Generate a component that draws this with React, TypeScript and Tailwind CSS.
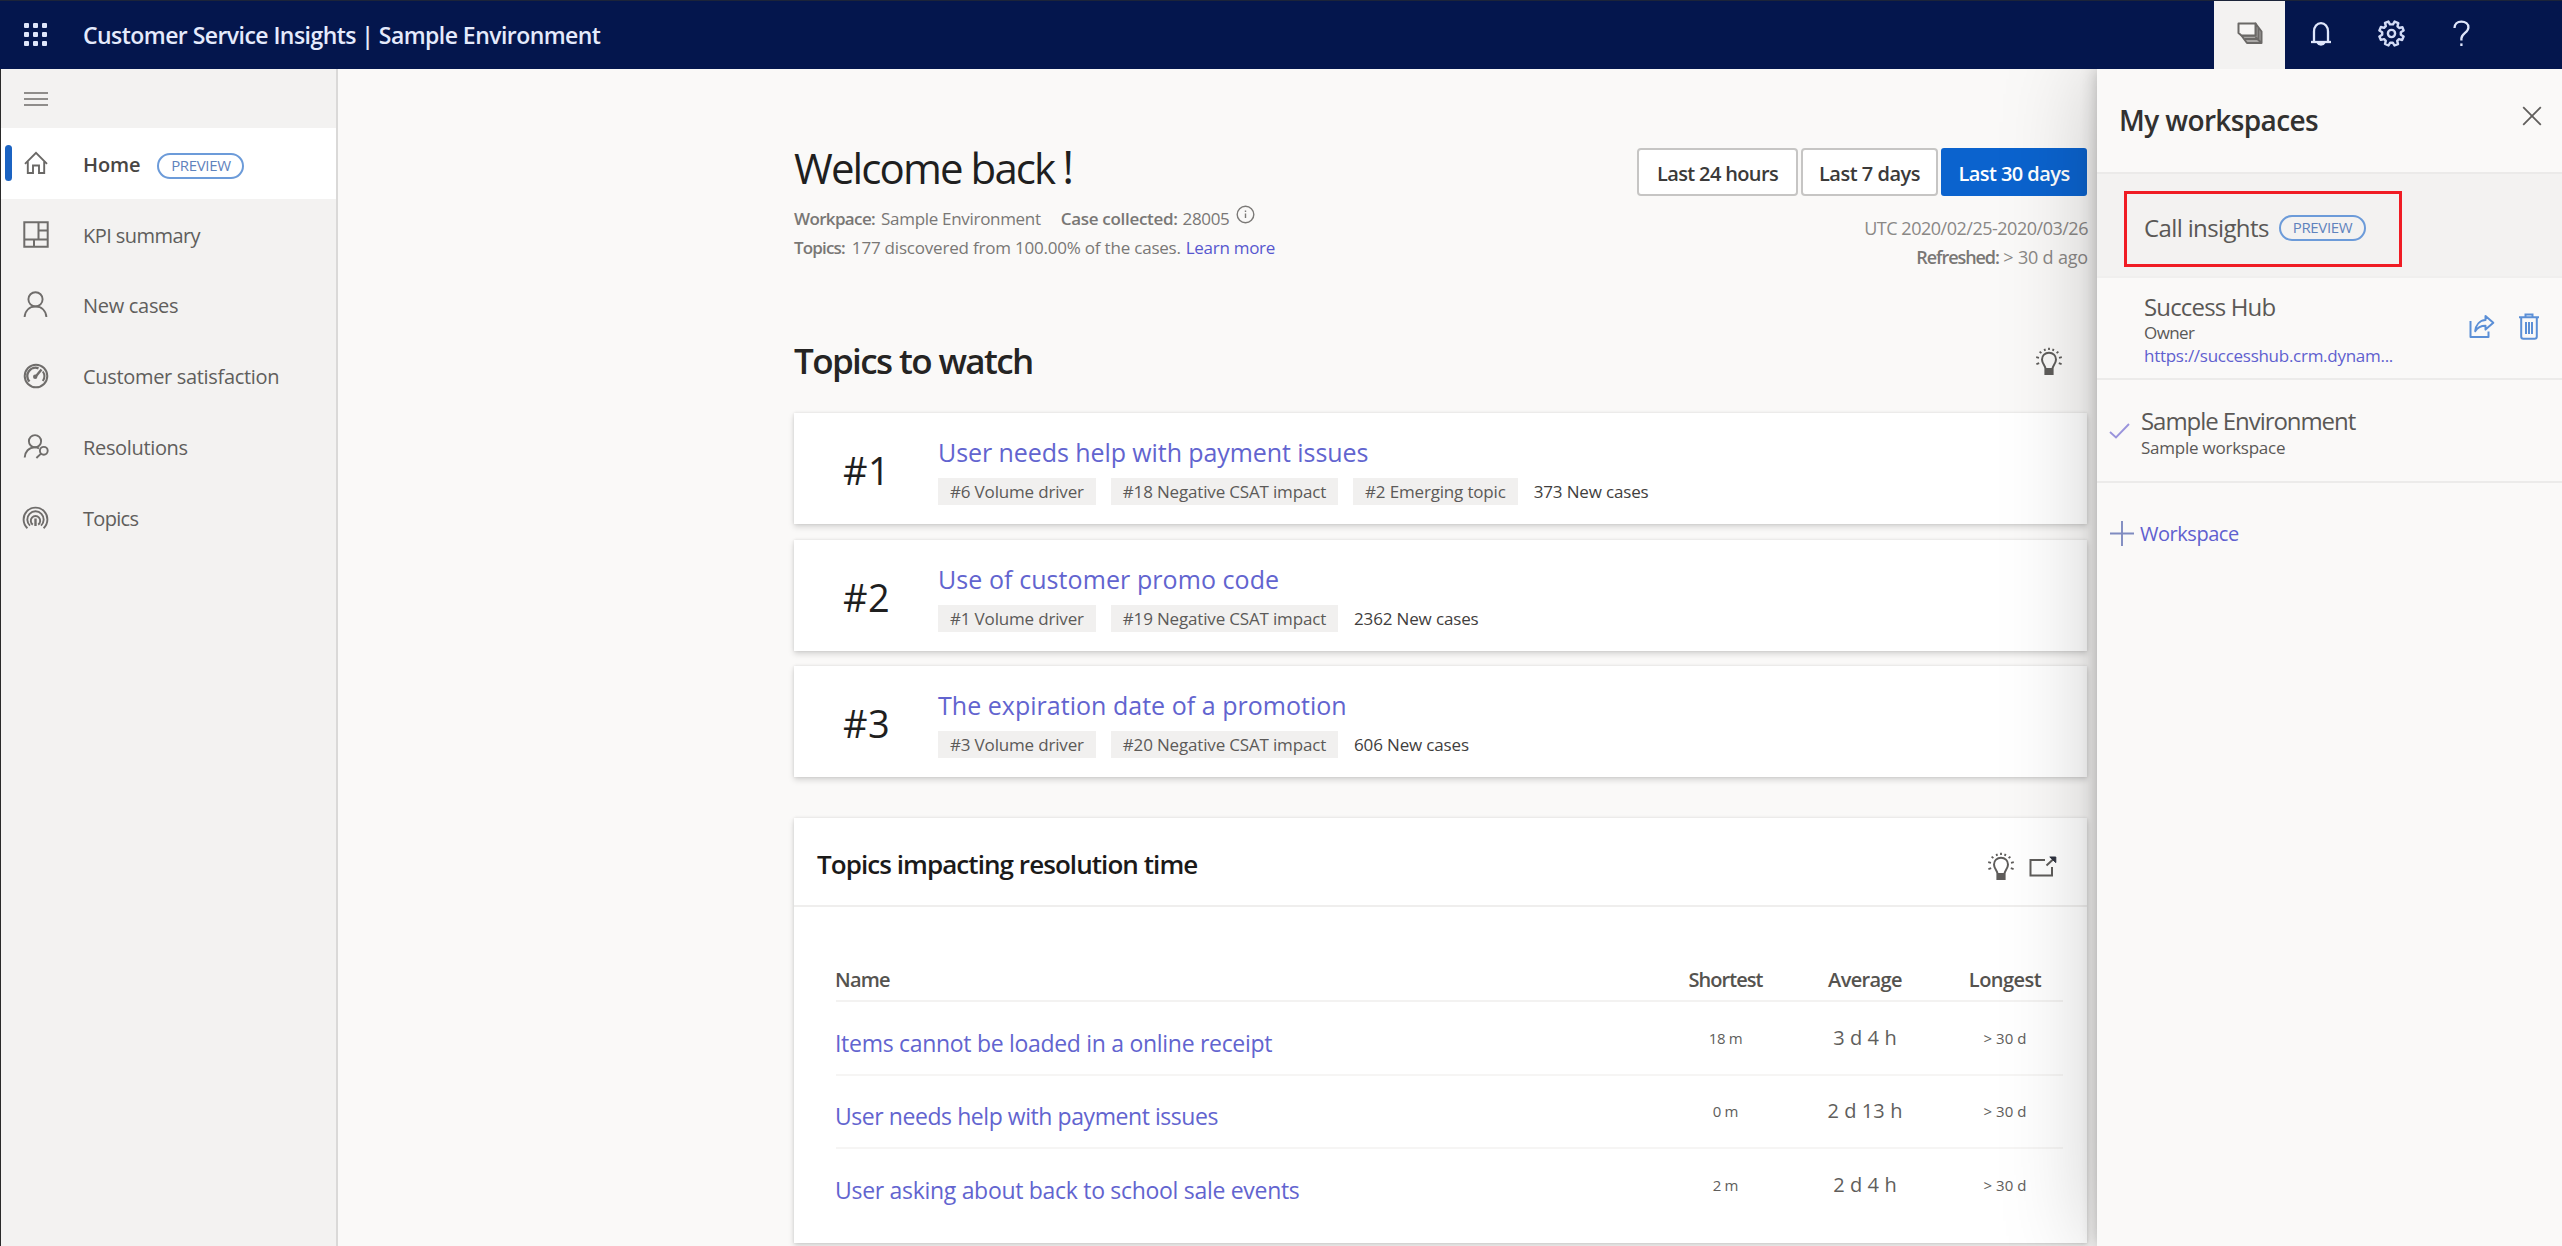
import React from "react";

type IconProps = { className?: string };

const StackIcon = () => (
  <svg width="26" height="23" viewBox="0 0 26 23" fill="none" stroke="#6b6967" strokeWidth="2" strokeLinejoin="round">
    <path d="M7 17L4.5 13.5H18.5V1.5L24.5 9.5V21H10Z" fill="#a9a7a5" />
    <path d="M1.5 1.5H18.5V13.5H4.5L1.5 11Z" fill="#f7f6f5" />
    <path d="M21.5 6V17H7.5" />
    <path d="M18.5 15L24 20.5" />
  </svg>
);

const BellIcon = () => (
  <svg width="22" height="26" viewBox="0 0 22 26" fill="none" stroke="#dfe6fb" strokeWidth="2.3">
    <path d="M1 21H21" />
    <path d="M4 21V10.5C4 5.5 7 2.2 11 2.2S18 5.5 18 10.5V21" />
    <path d="M8 22.2C8.6 24 13.4 24 14 22.2Z" fill="#dfe6fb" />
  </svg>
);

const GearIcon = () => (
  <svg width="27" height="27" viewBox="0 0 27 27" fill="none" stroke="#d3dcf6" strokeWidth="2.4" strokeLinejoin="round">
    <path d="M10.4 1.6L12 4.4H15L16.6 1.6L20.3 3.1L19.5 6.3L21.2 8L24.4 7.2L25.6 10.5L22.8 12.2V14.8L25.6 16.5L24.1 20L20.9 19.2L19.2 20.9L20 24.1L16.5 25.5L14.8 22.7H12.2L10.5 25.5L7 24L7.8 20.8L6.1 19.1L2.9 19.9L1.4 16.5L4.2 14.8V12.2L1.4 10.5L2.9 7L6.1 7.8L7.8 6.1L7 2.9Z" />
    <circle cx="13.5" cy="13.5" r="3.6" />
  </svg>
);

const HelpIcon = () => (
  <svg width="17" height="27" viewBox="0 0 17 27" fill="none" stroke="#dfe6fb" strokeWidth="2.3">
    <path d="M1.5 8C1.5 4 4.3 1.6 8.4 1.6S15.4 4 15.4 7.4C15.4 12.6 8.4 13 8.4 18.6V20.6" />
    <path d="M8.4 23.4V26" />
  </svg>
);

const HomeIcon = () => (
  <svg width="24" height="24" viewBox="0 0 24 24" fill="none" stroke="#6a6866" strokeWidth="1.9">
    <path d="M1 12.8L12 1.8L23 12.8" />
    <path d="M3.8 10.5V22H9V14.5H15V22H20.2V10.5" />
  </svg>
);

const KpiIcon = () => (
  <svg width="26" height="27" viewBox="0 0 26 27" fill="none" stroke="#6f6d6b" strokeWidth="2">
    <path d="M1.3 1.3H24.7V25.7H1.3Z" />
    <path d="M15.5 1.3V18.5M1.3 18.5H24.7M15.5 9.5H24.7M11 18.5V25.7" />
  </svg>
);

const PersonIcon = () => (
  <svg width="25" height="27" viewBox="0 0 25 27" fill="none" stroke="#6f6d6b" strokeWidth="1.9">
    <circle cx="12.5" cy="8.3" r="7.1" />
    <path d="M1.6 26C2.2 19.5 6.4 15.5 12.5 15.5S22.8 19.5 23.4 26" />
  </svg>
);

const GaugeIcon = () => (
  <svg width="26" height="26" viewBox="0 0 26 26" fill="none" stroke="#6f6d6b">
    <circle cx="13" cy="13" r="11.3" strokeWidth="2" />
    <path d="M6.5 18.5A8.2 8.2 0 0 1 15.5 5.3" strokeWidth="2.4" />
    <path d="M19.8 8.5A8.2 8.2 0 0 1 19.8 18" strokeWidth="2" />
    <path d="M12.3 14L18.5 6.6" strokeWidth="2.4" />
    <circle cx="12.2" cy="13.8" r="2.2" fill="#6f6d6b" stroke="none" />
  </svg>
);

const PersonKeyIcon = () => (
  <svg width="26" height="25" viewBox="0 0 26 25" fill="none" stroke="#6f6d6b" strokeWidth="1.9">
    <circle cx="12" cy="7.2" r="6.1" />
    <path d="M1.7 23.5C2 17.6 5.8 13.4 11.8 13.4C13.4 13.4 14.8 13.7 16 14.3" />
    <circle cx="20.8" cy="16.8" r="3.9" />
    <path d="M18 19.6L13.4 24" />
  </svg>
);

const BroadcastIcon = () => (
  <svg width="27" height="25" viewBox="0 0 27 25" fill="none" stroke="#6f6d6b" strokeWidth="1.9">
    <path d="M5.4 23.2A11.9 11.9 0 1 1 21.6 23.2" />
    <path d="M8 20.6A8.2 8.2 0 1 1 19 20.6" />
    <path d="M10.8 19.6A4.7 4.7 0 1 1 16.2 19.6" />
    <path d="M13.5 13.5V21" strokeWidth="2.4" />
  </svg>
);

const BulbIcon = ({ className }: IconProps) => (
  <svg className={className} width="28" height="29" viewBox="0 0 28 29" fill="none" stroke="#5f5d5b" strokeWidth="2">
    <path d="M10.4 21.5C10.4 18.4 7 16.6 7 12.4C7 8.6 10 5.7 14 5.7S21 8.6 21 12.4C21 16.6 17.6 18.4 17.6 21.5V27H10.4Z" />
    <path d="M10.4 22.4H17.6M10.4 25H17.6" strokeWidth="2.6" />
    <path d="M14 .8V3M9.4 1.8L10.2 3.8M18.6 1.8L17.8 3.8M4.6 4.6L6.4 6.2M23.4 4.6L21.6 6.2M1.2 10.2L4 10.8M26.8 10.2L24 10.8M1.4 17.2L4.2 16.2M26.6 17.2L23.8 16.2" strokeWidth="1.8" />
  </svg>
);

const PopOutIcon = () => (
  <svg width="28" height="21" viewBox="0 0 28 21" fill="none" stroke="#5f5d5b" strokeWidth="2">
    <path d="M16 4H1.5V19.5H23V11" />
    <path d="M17.5 9.5L24 3.5" />
    <path d="M20.8 1H26.8V6.6Z" fill="#2f3340" stroke="#2f3340" strokeWidth="1" />
  </svg>
);

const InfoIcon = () => (
  <svg width="19" height="19" viewBox="0 0 19 19" fill="none" stroke="#7b7977" strokeWidth="1.4">
    <circle cx="9.5" cy="9.5" r="8.3" />
    <path d="M9.5 8.4V13M9.5 5.4V7" />
  </svg>
);

const CloseIcon = () => (
  <svg width="20" height="20" viewBox="0 0 20 20" stroke="#605e5c" strokeWidth="1.8">
    <path d="M1.2 1.2L18.8 18.8M18.8 1.2L1.2 18.8" />
  </svg>
);

const ShareIcon = () => (
  <svg width="26" height="25" viewBox="0 0 26 25" fill="none" stroke="#5b8fd6" strokeWidth="2" strokeLinejoin="round">
    <path d="M1.5 7V23H19.5V17.5" />
    <path d="M16.5 2L24.3 8.8L16.5 15.6V11.8C11.8 11.8 8.6 13.4 6.2 17.2C6.8 10.8 10.8 6.4 16.5 6Z" />
  </svg>
);

const TrashIcon = () => (
  <svg width="20" height="27" viewBox="0 0 20 27" fill="none" stroke="#5b8fd6" strokeWidth="2">
    <path d="M0 4.2H20M6.5 4V1.4H13.5V4" />
    <path d="M2.2 4.5V23.5C2.2 25 3 25.7 4.4 25.7H15.6C17 25.7 17.8 25 17.8 23.5V4.5" />
    <path d="M7 9V21M10 9V21M13 9V21" />
  </svg>
);

const CheckIcon = () => (
  <svg width="21" height="16" viewBox="0 0 21 16" fill="none" stroke="#9a94dc" strokeWidth="1.9">
    <path d="M1 9L7 14.5L20 1" />
  </svg>
);

const PlusIcon = () => (
  <svg width="24" height="25" viewBox="0 0 24 25" stroke="#7f8bc0" strokeWidth="1.9">
    <path d="M12 0V25M0 12.5H24" />
  </svg>
);

const Preview = () => (
  <span className="flex h-[26px] w-[87px] shrink-0 items-center justify-center rounded-full border-2 border-[#6c9bd9] text-[15px] leading-none tracking-[-0.023em] text-[#5f83bd]">
    PREVIEW
  </span>
);

const NAV = [
  { label: "Home", icon: HomeIcon, active: true, text: "font-semibold tracking-[-0.005em] text-[#484644]" },
  { label: "KPI summary", icon: KpiIcon, text: "tracking-[-0.028em]" },
  { label: "New cases", icon: PersonIcon, text: "tracking-[-0.015em]" },
  { label: "Customer satisfaction", icon: GaugeIcon, text: "tracking-[-0.016em]" },
  { label: "Resolutions", icon: PersonKeyIcon, text: "tracking-[-0.017em]" },
  { label: "Topics", icon: BroadcastIcon, text: "tracking-[-0.034em]" },
];

const WATCH = [
  {
    rank: "#1",
    title: "User needs help with payment issues",
    tags: ["#6 Volume driver", "#18 Negative CSAT impact", "#2 Emerging topic"],
    cases: "373 New cases",
    tracking: "tracking-[-0.003em]",
  },
  {
    rank: "#2",
    title: "Use of customer promo code",
    tags: ["#1 Volume driver", "#19 Negative CSAT impact"],
    cases: "2362 New cases",
    tracking: "tracking-[0.003em]",
  },
  {
    rank: "#3",
    title: "The expiration date of a promotion",
    tags: ["#3 Volume driver", "#20 Negative CSAT impact"],
    cases: "606 New cases",
    tracking: "tracking-[0.001em]",
  },
];

const ROWS = [
  { name: "Items cannot be loaded in a online receipt", s: "18 m", a: "3 d 4 h", l: "> 30 d", tracking: "tracking-[-0.013em]" },
  { name: "User needs help with payment issues", s: "0 m", a: "2 d 13 h", l: "> 30 d", tracking: "tracking-[-0.019em]" },
  { name: "User asking about back to school sale events", s: "2 m", a: "2 d 4 h", l: "> 30 d", tracking: "tracking-[-0.013em]" },
];

const CARD = "bg-white shadow-[0_3px_6px_rgba(0,0,0,0.15),0_0_3px_rgba(0,0,0,0.10)]";
const GRID = "grid grid-cols-[820px_139px_140px_140px]";

function Header() {
  return (
    <header className="flex h-[69px] shrink-0 items-center border-t border-[#1c2439] bg-[#04164d]">
      <div className="ml-[24px] grid grid-cols-3 gap-[4px] pb-[2px]">
        {Array.from({ length: 9 }, (_, i) => (
          <span key={i} className="size-[5px] rounded-[1px] bg-[#dfe6fb]" />
        ))}
      </div>
      <h1 className="ml-[36px] text-[23px] font-semibold tracking-[-0.024em] text-[#e4eafc]">
        Customer Service Insights | Sample Environment
      </h1>
      <div className="mr-[65px] ml-auto flex h-full">
        <div className="flex w-[71px] items-center justify-center bg-[#f3f2f1] pb-[4px]">
          <StackIcon />
        </div>
        <div className="flex w-[71px] items-center justify-center pb-[3px]">
          <BellIcon />
        </div>
        <div className="flex w-[70px] items-center justify-center pb-[3px]">
          <GearIcon />
        </div>
        <div className="flex w-[71px] items-center justify-center pb-[3px]">
          <HelpIcon />
        </div>
      </div>
    </header>
  );
}

function Sidebar() {
  return (
    <nav className="w-[338px] shrink-0 border-r-2 border-l-[1.5px] border-r-[#dad9d8] border-l-[#2a2a2a] bg-[#f3f2f1]">
      <div className="flex h-[59px] flex-col gap-[4px] pt-[23px] pl-[23px]">
        <span className="h-[2px] w-[24px] bg-[#8f8d8b]" />
        <span className="h-[2px] w-[24px] bg-[#8f8d8b]" />
        <span className="h-[2px] w-[24px] bg-[#8f8d8b]" />
      </div>
      {NAV.map(({ label, icon: Icon, active, text }) => (
        <div key={label} className={`flex h-[70.8px] items-center ${active ? "bg-white" : ""}`}>
          <span className={`ml-[4px] h-[36px] w-[7px] rounded-sm ${active ? "bg-[#1b63c2]" : ""}`} />
          <span className="ml-[9px] flex w-[29px] justify-center">
            <Icon />
          </span>
          <span className={`ml-[33px] pt-[3px] text-[20px] text-[#605e5c] ${text}`}>{label}</span>
          {active && (
            <span className="mt-[5px] ml-[17px]">
              <Preview />
            </span>
          )}
        </div>
      ))}
    </nav>
  );
}

function Welcome() {
  return (
    <div className="flex justify-between pt-[73px]">
      <div className="text-[17px] leading-[28.5px] text-[#797775]">
        <h2 className="mb-[11px] text-[42px] leading-[52px] tracking-[-0.045em] text-[#1f1f1f]">
          Welcome back<span className="ml-[8px] text-[45px] leading-none">!</span>
        </h2>
        <div className="flex">
          <span className="font-semibold tracking-[-0.038em]">Workpace:</span>
          <span className="ml-[6px] tracking-[-0.018em]">Sample Environment</span>
          <span className="ml-[20px] font-semibold tracking-[-0.018em]">Case collected:</span>
          <span className="ml-[5px] tracking-[-0.02em]">28005</span>
          <span className="ml-[7px]">
            <InfoIcon />
          </span>
        </div>
        <div className="flex">
          <span className="font-semibold tracking-[-0.049em]">Topics:</span>
          <span className="ml-[7px] tracking-[-0.012em]">177 discovered from 100.00% of the cases.</span>
          <span className="ml-[5px] tracking-[-0.017em] text-[#5757cf]">Learn more</span>
        </div>
      </div>
      <div className="flex flex-col items-end pt-[6px]">
        <div className="flex h-[48px] gap-[3px] text-[20px] font-semibold text-[#3b3a39]">
          <span className="flex w-[161px] items-center justify-center rounded-[4px] border-2 border-[#c6c5c4] bg-white pt-[3px] tracking-[-0.032em]">
            Last 24 hours
          </span>
          <span className="flex w-[137px] items-center justify-center rounded-[4px] border-2 border-[#c6c5c4] bg-white pt-[3px] tracking-[-0.024em]">
            Last 7 days
          </span>
          <span className="flex w-[146px] items-center justify-center rounded-[3px] bg-[#0b63ce] pt-[3px] tracking-[-0.028em] text-white">
            Last 30 days
          </span>
        </div>
        <div className="-mr-px mt-[18px] text-right text-[18px] leading-[29px] text-[#8a8886]">
          <div className="tracking-[-0.027em]">UTC 2020/02/25-2020/03/26</div>
          <div className="tracking-[-0.01em]">
            <span className="font-semibold tracking-[-0.06em] text-[#797775]">Refreshed:</span> &gt; 30 d ago
          </div>
        </div>
      </div>
    </div>
  );
}

function TopicsToWatch() {
  return (
    <section>
      <div className="mt-[65px] mb-[28px] flex items-center justify-between pr-[24px]">
        <h3 className="text-[35px] leading-[48px] font-semibold tracking-[-0.046em] text-[#252423]">Topics to watch</h3>
        <BulbIcon />
      </div>
      <div className="flex flex-col gap-[15.5px]">
        {WATCH.map((t) => (
          <div key={t.rank} className={`flex h-[111px] items-center ${CARD}`}>
            <span className="ml-[49px] w-[95px] pt-[4px] text-[38px] tracking-[0.012em] text-[#1f1f1f]">{t.rank}</span>
            <div className="pt-[3px]">
              <div className={`text-[25px] leading-[34px] text-[#6264cf] ${t.tracking}`}>{t.title}</div>
              <div className="mt-[9px] flex items-center gap-[15px] text-[17px] leading-[27px] text-[#5c5a58]">
                {t.tags.map((tag) => (
                  <span key={tag} className="bg-[#f1f0ef] px-[12px] tracking-[-0.01em]">
                    {tag}
                  </span>
                ))}
                <span className="ml-px tracking-[-0.009em] text-[#3f3e3d]">{t.cases}</span>
              </div>
            </div>
          </div>
        ))}
      </div>
    </section>
  );
}

function ResolutionTime() {
  return (
    <section className={`mt-[41px] h-[425px] ${CARD}`}>
      <div className="flex h-[89px] items-center border-b-2 border-[#efeeed] pt-[6px] pr-[30px] pl-[23px]">
        <h3 className="text-[26px] font-semibold tracking-[-0.036em] text-[#1b1a19]">Topics impacting resolution time</h3>
        <BulbIcon className="mt-[4px] ml-auto" />
        <span className="mt-[4px] ml-[14px]">
          <PopOutIcon />
        </span>
      </div>
      <div className="mx-[23px] pt-[58px] pr-[1px] pl-[19px]">
        <div className={`${GRID} h-[37px] border-b-2 border-[#f3f2f1] text-center text-[20px] leading-[30px] font-semibold text-[#55534f]`}>
          <span className="-ml-px text-left tracking-[-0.039em]">Name</span>
          <span className="tracking-[-0.048em]">Shortest</span>
          <span className="tracking-[-0.031em]">Average</span>
          <span className="tracking-[-0.026em]">Longest</span>
        </div>
        {ROWS.map((r) => (
          <div
            key={r.name}
            className={`${GRID} h-[73.5px] items-center border-b-2 border-[#f6f5f4] text-center text-[#605e5c] last:border-transparent`}
          >
            <span className={`-ml-px pt-[10px] text-left text-[23px] text-[#6264cf] ${r.tracking}`}>{r.name}</span>
            <span className="text-[15px] tracking-[-0.023em]">{r.s}</span>
            <span className="text-[20px] tracking-[0.004em]">{r.a}</span>
            <span className="text-[15px] tracking-[0.006em]">{r.l}</span>
          </div>
        ))}
      </div>
    </section>
  );
}

function Workspaces() {
  return (
    <aside className="relative z-10 flex w-[465px] shrink-0 flex-col bg-[#faf9f8] text-[#5a5856] shadow-[0_0_90px_rgba(0,0,0,0.22),0_0_16px_rgba(0,0,0,0.24)]">
      <div className="flex h-[105px] items-center justify-between border-b-2 border-[#ebeae9] pr-[20px] pb-[2px] pl-[22px]">
        <h2 className="text-[28px] font-semibold tracking-[-0.022em] text-[#323130]">My workspaces</h2>
        <span className="mb-[8px]">
          <CloseIcon />
        </span>
      </div>
      <div className="h-[104px] border-b-2 border-[#f0efee] bg-[#f3f2f1] pt-[17px] pl-[27px]">
        <div className="flex h-[76px] w-[278px] items-center border-[3px] border-[#f01c24] pb-[3px] pl-[17px]">
          <span className="w-[135px] text-[24px] tracking-[-0.026em]">Call insights</span>
          <Preview />
        </div>
      </div>
      <div className="flex h-[102px] items-start border-b-2 border-[#ecebea] pt-[14px] pr-[23px] pl-[47px]">
        <div className="text-[17px] leading-[22.5px]">
          <div className="text-[24px] leading-[30px] tracking-[-0.035em]">Success Hub</div>
          <div className="tracking-[-0.035em]">Owner</div>
          <div className="tracking-[-0.016em] text-[#5f60cf]">https://successhub.crm.dynam...</div>
        </div>
        <span className="mt-[22px] ml-auto">
          <ShareIcon />
        </span>
        <span className="mt-[21px] ml-[24px]">
          <TrashIcon />
        </span>
      </div>
      <div className="flex h-[103px] items-start border-b-2 border-[#ecebea] pt-[26px] pl-[12px]">
        <span className="mt-[17px]">
          <CheckIcon />
        </span>
        <div className="ml-[11px] text-[17px] leading-[23px]">
          <div className="text-[24px] leading-[30px] tracking-[-0.044em]">Sample Environment</div>
          <div className="tracking-[-0.014em]">Sample workspace</div>
        </div>
      </div>
      <div className="mt-[34px] flex items-center pl-[13px]">
        <PlusIcon />
        <span className="mt-[2px] ml-[6px] text-[20px] leading-[30px] tracking-[-0.023em] text-[#5f60cf]">Workspace</span>
      </div>
    </aside>
  );
}

export default function App() {
  return (
    <div className="flex h-[1246px] w-[2562px] flex-col overflow-hidden bg-[#faf9f8] font-['Open_Sans',sans-serif]">
      <Header />
      <div className="flex min-h-0 flex-1 overflow-hidden">
        <Sidebar />
        <main className="w-[1759px] shrink-0 pr-[10px] pl-[456px]">
          <Welcome />
          <TopicsToWatch />
          <ResolutionTime />
        </main>
        <Workspaces />
      </div>
    </div>
  );
}
